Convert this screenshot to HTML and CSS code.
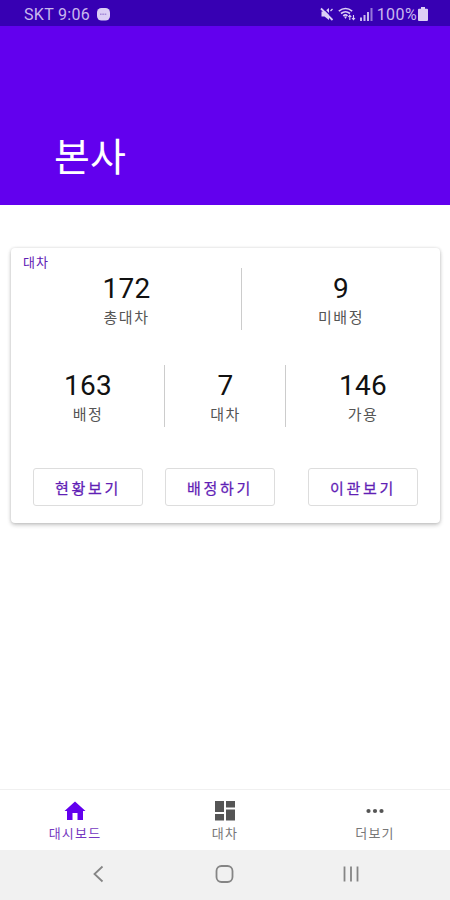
FILE: index.html
```
<!DOCTYPE html>
<html lang="ko">
<head>
    <meta charset="UTF-8">
    <meta name="viewport" content="width=device-width, initial-scale=1.0">
    <title>본사</title>
    <link rel="stylesheet" href="styles.css">
</head>
<body>

    <!-- 상태 표시줄 -->
    <div class="status-bar">
        <span class="carrier">SKT 9:06</span>
        <svg class="chat" width="13" height="13" viewBox="0 0 13 13">
            <rect width="13" height="12.5" rx="4.5" fill="#dccff5"/>
            <path d="M3 6.2h7" stroke="#a58bd8" stroke-width="1.6" stroke-dasharray="1.6 .7"/>
        </svg>
        <div class="status-icons">
            <svg width="14" height="14" viewBox="0 0 14 14" fill="#dccff5">
                <path d="M1.500 4.500h3L9 1v12L4.500 9.500h-3z"/>
                <path d="M2.500 .5l11 11" stroke="#3700b3" stroke-width="1.500"/>
                <path d="M1 1.500l11.500 11.500" stroke="#dccff5" stroke-width="1.800"/>
                <path d="M10.500 4l2-2" stroke="#dccff5" stroke-width="1.300"/>
            </svg>
            <svg width="18" height="14" viewBox="0 0 18 14" fill="none" stroke="#dccff5" stroke-width="1.600">
                <path d="M.8 4.200Q7.500-1.200 14.200 4.200M3 6.500Q7.500 3 12 6.500M5.200 8.800Q7.500 7 9.500 8.800"/>
                <path d="M7.500 12L6 9.500h3z" fill="#dccff5" stroke="none"/>
                <path d="M11.800 13V8.500M10.300 10l1.500-1.700L13.300 10M15.500 8v4.500M14 11l1.500 1.700L17 11" stroke-width="1.100"/>
            </svg>
            <svg width="13" height="13" viewBox="0 0 13 13" fill="#c9b8ee">
                <path d="M0 9.500h2V13H0zM3.500 7h2v6h-2zM7 4h2v9H7z"/>
                <path d="M10.500 0h2v13h-2z" opacity=".65"/>
            </svg>
            <span class="percent">100%</span>
            <svg width="10" height="14" viewBox="0 0 10 14" fill="#dccff5">
                <path d="M3 0h4v1.800h2q1 0 1 1V13q0 1-1 1H1q-1 0-1-1V2.800q0-1 1-1h2z"/>
            </svg>
        </div>
    </div>

    <!-- 상단 제목 -->
    <header class="app-bar">
        <h1>본사</h1>
    </header>

    <main class="content">
        <section class="card">
            <h2>대차</h2>
            <div class="stats stats-top">
                <div class="stat"><strong>172</strong><span>총대차</span></div>
                <div class="stat"><strong>9</strong><span>미배정</span></div>
            </div>
            <div class="stats stats-bottom">
                <div class="stat"><strong>163</strong><span>배정</span></div>
                <div class="stat"><strong>7</strong><span>대차</span></div>
                <div class="stat"><strong>146</strong><span>가용</span></div>
            </div>
            <div class="actions">
                <button>현황보기</button>
                <button>배정하기</button>
                <button>이관보기</button>
            </div>
        </section>
    </main>

    <!-- 하단 메뉴 -->
    <nav class="bottom-nav">
        <a class="nav-item active">
            <svg width="24" height="24" viewBox="0 0 24 24"><path d="M9.500 21v-7h5v7H20v-9h2.500L12 2.500 1.500 12H4v9z"/></svg>
            <span>대시보드</span>
        </a>
        <a class="nav-item">
            <svg width="24" height="24" viewBox="0 0 24 24"><path d="M2 2h9v11H2zM13 2h9v6.500h-9zM2 15h9v6.500H2zM13 10.500h9v11h-9z"/></svg>
            <span>대차</span>
        </a>
        <a class="nav-item">
            <svg width="24" height="24" viewBox="0 0 24 24"><circle cx="5.500" cy="12" r="2.100"/><circle cx="12" cy="12" r="2.100"/><circle cx="18.500" cy="12" r="2.100"/></svg>
            <span>더보기</span>
        </a>
    </nav>

    <!-- 시스템 버튼 -->
    <div class="system-bar">
        <svg width="20" height="20" viewBox="0 0 20 20"><path d="M14.500 2.500L6.500 10l8 7.500"/></svg>
        <svg width="20" height="20" viewBox="0 0 20 20"><rect x="1.500" y="2" width="16" height="16" rx="5"/></svg>
        <svg width="20" height="20" viewBox="0 0 20 20"><path d="M3.500 2.500v15M10 2.500v15M16.500 2.500v15"/></svg>
    </div>

</body>
</html>
```
FILE: styles.css
```
* {
    box-sizing: border-box;
}

body {
    display: flex;
    flex-direction: column;
    height: 900px;
    margin: 0;
    background-color: #fff;
    color: #111;
    font-family: Roboto, "Noto Sans CJK KR", sans-serif;
}

/* 상태 표시줄 */
.status-bar {
    display: flex;
    align-items: center;
    height: 26px;
    padding: 2px 22px 0 24px;
    background-color: #3700b3;
    color: #c9b8ee;
    font-size: 16px;
}

.carrier {
    letter-spacing: .3px;
}

.chat {
    margin-left: 7px;
}

.status-icons {
    display: flex;
    align-items: center;
    gap: 4px;
    margin-left: auto;
}

.percent {
    margin-right: -3px;
    letter-spacing: .4px;
}

/* 상단 제목 */
.app-bar {
    height: 179px;
    padding: 104px 0 0 54px;
    background-color: #6200ee;
}

h1 {
    margin: 0;
    color: #fff;
    font-size: 39px;
    font-weight: 400;
    line-height: 56px;
}

.content {
    flex: 1;
    padding: 43px 10px 0 11px;
}

/* 카드 */
.card {
    height: 275px;
    border-radius: 4px;
    box-shadow: 0 2px 4px rgba(0, 0, 0, .22), 0 0 3px rgba(0, 0, 0, .12);
}

h2 {
    height: 20px;
    margin: 0;
    padding: 5px 0 0 12px;
    color: #5f20b5;
    font-size: 13px;
    font-weight: 400;
    line-height: 20px;
    letter-spacing: 1px;
}

.stats {
    display: grid;
    height: 60px;
}

.stats-top {
    grid-template-columns: 231px 1fr;
}

.stats-bottom {
    grid-template-columns: 154px 121px 1fr;
    margin-top: 37px;
}

.stat {
    display: flex;
    flex-direction: column;
    align-items: center;
    padding-top: 5px;
}

.stat + .stat {
    border-left: 1px solid #ccc;
    margin-left: -1px;
}

.stat strong {
    font-size: 28px;
    font-weight: 400;
    line-height: 32px;
    letter-spacing: .2px;
}

.stat span {
    padding-top: 1px;
    color: #555;
    font-size: 15px;
    line-height: 24px;
    letter-spacing: 1.5px;
}

.actions {
    display: grid;
    grid-template-columns: 110px 110px 110px;
    column-gap: 22px;
    margin: 43px 0 0 22px;
}

.actions button {
    height: 38px;
    padding: 0;
    border: 1px solid #ddd;
    border-radius: 3px;
    background-color: #fff;
    color: #5f20b5;
    font-family: inherit;
    font-size: 15px;
    font-weight: 400;
    letter-spacing: 2.7px;
    -webkit-text-stroke: .25px #5f20b5;
}

.actions button:last-child {
    margin: 0 -11px 0 11px;
}

/* 하단 메뉴 */
.bottom-nav {
    display: flex;
    height: 61px;
    border-top: 1px solid #f0f0f0;
}

.nav-item {
    display: flex;
    flex: 1;
    flex-direction: column;
    align-items: center;
    padding-top: 9px;
    color: #777;
    font-size: 13px;
    line-height: 22px;
    letter-spacing: 1.2px;
}

.nav-item svg {
    fill: #555;
}

.nav-item.active {
    color: #7538c0;
}

.nav-item.active svg {
    fill: #6200ee;
}

/* 시스템 버튼 */
.system-bar {
    display: flex;
    justify-content: space-between;
    height: 50px;
    padding: 14px 89px 0 88px;
    background-color: #f1f1f1;
}

.system-bar svg {
    fill: none;
    stroke: #858585;
    stroke-width: 1.8;
}
```
